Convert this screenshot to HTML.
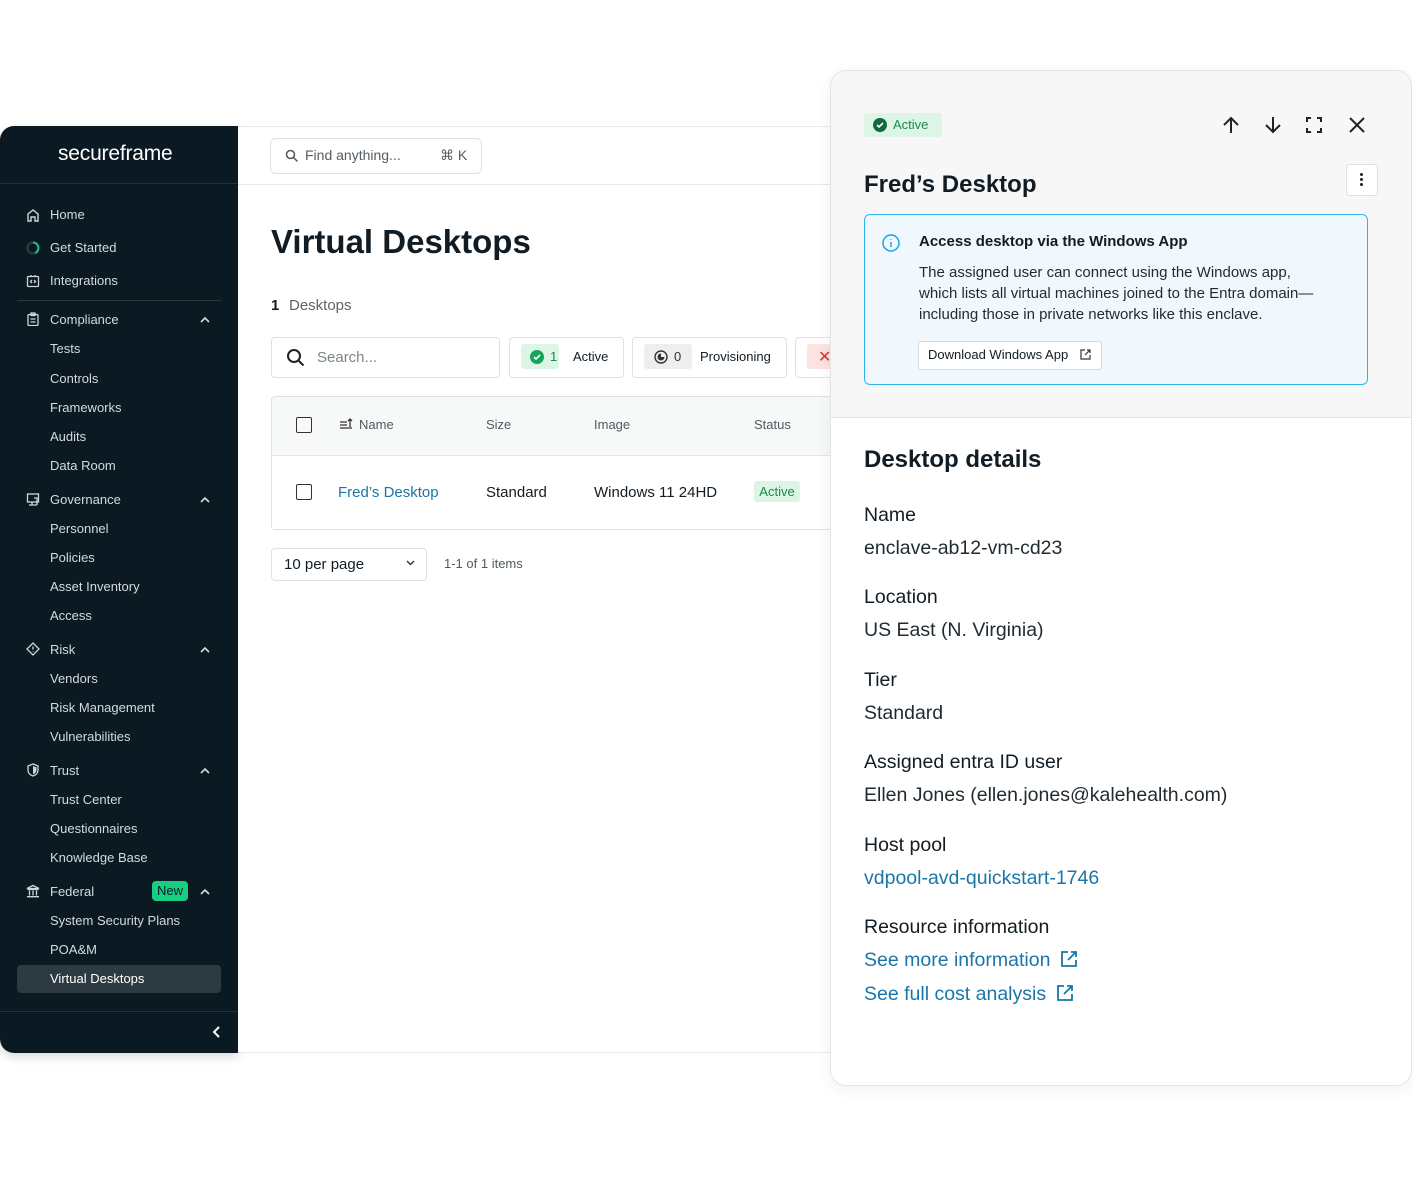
<!DOCTYPE html>
<html><head><meta charset="utf-8"><style>
*{box-sizing:border-box;margin:0;padding:0}
body{width:1412px;height:1200px;background:#fff;font-family:"Liberation Sans",sans-serif;position:relative;overflow:hidden;color:#111c24}
.a{position:absolute;white-space:nowrap}
#side{position:absolute;left:0;top:126px;width:238px;height:927px;background:#0b1a22;border-radius:14px 0 0 14px;box-shadow:0 4px 10px rgba(0,0,0,.15)}
.si{position:absolute;left:50px;font-size:13px;color:#d4dadd}
.ic{position:absolute;left:26px;width:14px;height:14px}
.chev{position:absolute;left:199px;width:12px;height:8px}
#main{position:absolute;left:238px;top:126px;width:600px;height:927px;background:#fff;border-top:1px solid #e6e8ea;border-bottom:1px solid #e6e8ea}
.box{position:absolute;border:1px solid #dde1e4;border-radius:4px;background:#fff}
#panel{position:absolute;left:830px;top:70px;width:582px;height:1016px;background:#fff;border:1px solid #e2e4e6;border-radius:16px;overflow:hidden;box-shadow:0 4px 16px rgba(0,0,0,.06)}
.lbl{position:absolute;left:33px;font-size:19.5px;color:#111c24}
.val{position:absolute;left:33px;font-size:19.5px;color:#1f2a31}
.lnk{color:#1a76a8}
</style></head><body>

<div id="side">
 <div class="a" style="left:58px;top:16px;font-size:21px;color:#fff;letter-spacing:-.2px">secureframe</div>
 <div style="position:absolute;left:0;top:57px;width:238px;height:1px;background:#253139"></div>
 <svg class="ic" style="top:82px" viewBox="0 0 14 14" fill="none" stroke="#cfd5d8" stroke-width="1.4"><path d="M2 13V6l5-4 5 4v7H9V9H5v4z"/></svg>
 <div class="si" style="top:81px">Home</div>
 <svg class="ic" style="top:115px" viewBox="0 0 14 14" fill="none" stroke-width="2"><circle cx="7" cy="7" r="5.5" stroke="#2f3c44"/><path d="M7 1.5A5.5 5.5 0 0 1 9 12.1" stroke="#16c784"/></svg>
 <div class="si" style="top:114px">Get Started</div>
 <svg class="ic" style="top:148px" viewBox="0 0 14 14" fill="none" stroke="#cfd5d8" stroke-width="1.3"><rect x="1.5" y="2.5" width="11" height="10" rx="1"/><path d="M5 1v2M9 1v2M6 6l-1.5 1.5L6 9M8 6l1.5 1.5L8 9"/></svg>
 <div class="si" style="top:147px">Integrations</div>
 <div style="position:absolute;left:17px;top:174px;width:204px;height:1px;background:#2a363d"></div>
 <svg class="ic" style="top:186px" viewBox="0 0 14 14" fill="none" stroke="#cfd5d8" stroke-width="1.3"><rect x="2" y="2.5" width="10" height="11" rx="1"/><rect x="5" y="1" width="4" height="2.5"/><path d="M4.5 7h5M4.5 10h5"/></svg>
 <div class="si" style="top:186px">Compliance</div><svg class="chev" style="top:190px" viewBox="0 0 12 8" fill="none" stroke="#d4dadd" stroke-width="1.6"><path d="M2 6l4-4 4 4"/></svg>
 <div class="si" style="top:215px">Tests</div>
 <div class="si" style="top:245px">Controls</div>
 <div class="si" style="top:274px">Frameworks</div>
 <div class="si" style="top:303px">Audits</div>
 <div class="si" style="top:332px">Data Room</div>
 <svg class="ic" style="top:366px" viewBox="0 0 14 14" fill="none" stroke="#cfd5d8" stroke-width="1.3"><rect x="1.5" y="2" width="11" height="8"/><path d="M6 10v3M3 13h8M8 6h3v7"/></svg>
 <div class="si" style="top:366px">Governance</div><svg class="chev" style="top:370px" viewBox="0 0 12 8" fill="none" stroke="#d4dadd" stroke-width="1.6"><path d="M2 6l4-4 4 4"/></svg>
 <div class="si" style="top:395px">Personnel</div>
 <div class="si" style="top:424px">Policies</div>
 <div class="si" style="top:453px">Asset Inventory</div>
 <div class="si" style="top:482px">Access</div>
 <svg class="ic" style="top:516px" viewBox="0 0 14 14" fill="none" stroke="#cfd5d8" stroke-width="1.3"><path d="M7 1l6 6-6 6-6-6z"/><path d="M7 4.5v3M7 9.3v.5"/></svg>
 <div class="si" style="top:516px">Risk</div><svg class="chev" style="top:520px" viewBox="0 0 12 8" fill="none" stroke="#d4dadd" stroke-width="1.6"><path d="M2 6l4-4 4 4"/></svg>
 <div class="si" style="top:545px">Vendors</div>
 <div class="si" style="top:574px">Risk Management</div>
 <div class="si" style="top:603px">Vulnerabilities</div>
 <svg class="ic" style="top:637px" viewBox="0 0 14 14"><path d="M7 1l5 2v4c0 3-2 5-5 6-3-1-5-3-5-6V3z" fill="none" stroke="#cfd5d8" stroke-width="1.3"/><path d="M7 3l3.5 1.4V7c0 2-1.4 3.6-3.5 4.4z" fill="#cfd5d8"/></svg>
 <div class="si" style="top:637px">Trust</div><svg class="chev" style="top:641px" viewBox="0 0 12 8" fill="none" stroke="#d4dadd" stroke-width="1.6"><path d="M2 6l4-4 4 4"/></svg>
 <div class="si" style="top:666px">Trust Center</div>
 <div class="si" style="top:695px">Questionnaires</div>
 <div class="si" style="top:724px">Knowledge Base</div>
 <svg class="ic" style="top:758px" viewBox="0 0 14 14" fill="none" stroke="#cfd5d8" stroke-width="1.3"><path d="M1 4.5L7 1.5l6 3zM1.5 5.5h11M3.5 6.5v5M7 6.5v5M10.5 6.5v5M1 12.7h12"/></svg>
 <div class="si" style="top:758px">Federal</div>
 <div class="a" style="left:152px;top:755px;width:36px;height:20px;background:#16cf82;border-radius:4px;font-size:13px;color:#0b1a22;text-align:center;line-height:20px">New</div>
 <svg class="chev" style="top:762px" viewBox="0 0 12 8" fill="none" stroke="#d4dadd" stroke-width="1.6"><path d="M2 6l4-4 4 4"/></svg>
 <div class="si" style="top:787px">System Security Plans</div>
 <div class="si" style="top:816px">POA&amp;M</div>
 <div style="position:absolute;left:17px;top:839px;width:204px;height:28px;background:#2e3a42;border-radius:4px"></div>
 <div class="si" style="top:845px;color:#fff">Virtual Desktops</div>
 <div style="position:absolute;left:0;top:885px;width:238px;height:1px;background:#253139"></div>
 <svg style="position:absolute;left:211px;top:899px" width="12" height="14" viewBox="0 0 12 14" fill="none" stroke="#fff" stroke-width="2"><path d="M8 2L3 7l5 5"/></svg>
</div>

<div id="main">
 <div style="position:absolute;left:0;top:57px;width:600px;height:1px;background:#e6e8ea"></div>
 <div class="box" style="left:32px;top:11px;width:212px;height:36px;border-radius:6px"></div>
 <svg class="a" style="left:47px;top:22px" width="14" height="14" viewBox="0 0 14 14" fill="none" stroke="#555" stroke-width="1.5"><circle cx="5.5" cy="5.5" r="4"/><path d="M8.5 8.5l4 4"/></svg>
 <div class="a" style="left:67px;top:20px;font-size:14px;color:#555e64">Find anything...</div>
 <div class="a" style="left:202px;top:20px;font-size:14px;color:#555e64">⌘ K</div>
 <div class="a" style="left:33px;top:96px;font-size:33px;font-weight:bold;color:#111c24">Virtual Desktops</div>
 <div class="a" style="left:33px;top:170px;font-size:15px;font-weight:bold">1</div>
 <div class="a" style="left:51px;top:170px;font-size:15px;color:#5b656c">Desktops</div>
 <div class="box" style="left:33px;top:210px;width:229px;height:41px"></div>
 <svg class="a" style="left:48px;top:221px" width="20" height="20" viewBox="0 0 20 20" fill="none" stroke="#222" stroke-width="2"><circle cx="8" cy="8" r="6"/><path d="M12.5 12.5l5 5"/></svg>
 <div class="a" style="left:79px;top:222px;font-size:15px;color:#7a848a">Search...</div>
 <div class="box" style="left:271px;top:210px;width:115px;height:41px"></div>
 <div class="a" style="left:283px;top:217px;width:38px;height:25px;background:#dcf5e7;border-radius:3px"></div>
 <svg class="a" style="left:292px;top:223px" width="14" height="14" viewBox="0 0 14 14"><circle cx="7" cy="7" r="7" fill="#1aa35b"/><path d="M4 7l2 2 4-4" stroke="#fff" stroke-width="1.6" fill="none"/></svg>
 <div class="a" style="left:312px;top:222px;font-size:13px;color:#1a8a4f">1</div>
 <div class="a" style="left:335px;top:222px;font-size:13px;color:#111c24">Active</div>
 <div class="box" style="left:394px;top:210px;width:155px;height:41px"></div>
 <div class="a" style="left:406px;top:217px;width:48px;height:25px;background:#eceef0;border-radius:3px"></div>
 <svg class="a" style="left:416px;top:223px" width="14" height="14" viewBox="0 0 14 14"><circle cx="7" cy="7" r="6" fill="none" stroke="#333" stroke-width="1.4"/><path d="M7 3.5A3.5 3.5 0 1 0 10.5 7H7z" fill="#333"/></svg>
 <div class="a" style="left:436px;top:222px;font-size:13px;color:#333">0</div>
 <div class="a" style="left:462px;top:222px;font-size:13px;color:#111c24">Provisioning</div>
 <div class="box" style="left:557px;top:210px;width:60px;height:41px"></div>
 <div class="a" style="left:569px;top:217px;width:40px;height:25px;background:#fde2e2;border-radius:3px"></div>
 <div class="a" style="left:580px;top:220px;font-size:16px;color:#d93030">✕</div>
 <div class="box" style="left:33px;top:269px;width:600px;height:134px;background:#f7f8f8"></div>
 <div style="position:absolute;left:34px;top:328px;width:566px;height:74px;background:#fff;border-top:1px solid #e3e6e8"></div>
 <div class="a" style="left:58px;top:290px;width:16px;height:16px;border:1.5px solid #333;border-radius:2px"></div>
 <svg class="a" style="left:101px;top:291px" width="14" height="12" viewBox="0 0 14 12" fill="none" stroke="#333" stroke-width="1.3"><path d="M1 4h7M1 7h7M1 10h12M11 9V1M9 3l2-2 2 2"/></svg>
 <div class="a" style="left:121px;top:290px;font-size:13px;color:#4f5a61">Name</div>
 <div class="a" style="left:248px;top:290px;font-size:13px;color:#4f5a61">Size</div>
 <div class="a" style="left:356px;top:290px;font-size:13px;color:#4f5a61">Image</div>
 <div class="a" style="left:516px;top:290px;font-size:13px;color:#4f5a61">Status</div>
 <div class="a" style="left:58px;top:357px;width:16px;height:16px;border:1.5px solid #333;border-radius:2px"></div>
 <div class="a lnk" style="left:100px;top:357px;font-size:15px">Fred’s Desktop</div>
 <div class="a" style="left:248px;top:357px;font-size:15px">Standard</div>
 <div class="a" style="left:356px;top:357px;font-size:15px">Windows 11 24HD</div>
 <div class="a" style="left:516px;top:354px;width:46px;height:21px;background:#dcf5e7;border-radius:3px;font-size:13px;color:#1a8a4f;text-align:center;line-height:21px">Active</div>
 <div class="box" style="left:33px;top:421px;width:156px;height:33px"></div>
 <div class="a" style="left:46px;top:429px;font-size:15px">10 per page</div>
 <svg class="a" style="left:168px;top:433px" width="9" height="6" viewBox="0 0 9 6" fill="none" stroke="#333" stroke-width="1.4"><path d="M1 1l3.5 3.5L8 1"/></svg>
 <div class="a" style="left:206px;top:429px;font-size:13px;color:#4f5a61">1-1 of 1 items</div>
</div>

<div id="panel">
 <div style="position:absolute;left:0;top:0;width:582px;height:347px;background:#f7f7f7;border-bottom:1px solid #e3e5e7"></div>
 <div class="a" style="left:33px;top:42px;width:78px;height:24px;background:#dcf5e7;border-radius:3px"></div>
 <svg class="a" style="left:42px;top:47px" width="14" height="14" viewBox="0 0 14 14"><circle cx="7" cy="7" r="7" fill="#13683f"/><path d="M4 7l2 2 4-4" stroke="#fff" stroke-width="1.6" fill="none"/></svg>
 <div class="a" style="left:62px;top:46px;font-size:13px;color:#1a8a4f">Active</div>
 <svg class="a" style="left:390px;top:44px" width="20" height="20" viewBox="0 0 20 20" fill="none" stroke="#222" stroke-width="2"><path d="M10 18V3M3 10l7-7 7 7"/></svg>
 <svg class="a" style="left:432px;top:44px" width="20" height="20" viewBox="0 0 20 20" fill="none" stroke="#222" stroke-width="2"><path d="M10 2v15M3 10l7 7 7-7"/></svg>
 <svg class="a" style="left:475px;top:46px" width="16" height="16" viewBox="0 0 16 16" fill="none" stroke="#222" stroke-width="2"><path d="M1 5V1h4M11 1h4v4M15 11v4h-4M5 15H1v-4"/></svg>
 <svg class="a" style="left:517px;top:45px" width="18" height="18" viewBox="0 0 18 18" fill="none" stroke="#222" stroke-width="2"><path d="M2 2l14 14M16 2L2 16"/></svg>
 <div class="a" style="left:33px;top:100px;font-size:24px;font-weight:bold;color:#111c24">Fred’s Desktop</div>
 <div class="a" style="left:515px;top:93px;width:32px;height:32px;background:#fff;border:1px solid #dde1e4;border-radius:4px"></div>
 <div class="a" style="left:529px;top:102px;width:3px;height:3px;background:#222;border-radius:50%;box-shadow:0 5px 0 #222,0 10px 0 #222"></div>
 <div class="a" style="left:33px;top:143px;width:504px;height:171px;background:#f0f8fd;border:1.5px solid #2bb4ef;border-radius:6px"></div>
 <svg class="a" style="left:51px;top:163px" width="18" height="18" viewBox="0 0 18 18" fill="none" stroke="#1aa3e8" stroke-width="1.5"><circle cx="9" cy="9" r="8"/><path d="M9 8v5M9 5v.8"/></svg>
 <div class="a" style="left:88px;top:162px;font-size:15px;font-weight:bold;color:#111c24">Access desktop via the Windows App</div>
 <div class="a" style="left:88px;top:191px;font-size:15px;line-height:21px;color:#1f2a31;white-space:normal;width:405px">The assigned user can connect using the Windows app, which lists all virtual machines joined to the Entra domain—including those in private networks like this enclave.</div>
 <div class="a" style="left:87px;top:270px;width:184px;height:29px;background:#fff;border:1px solid #d6dadd;border-radius:3px"></div>
 <div class="a" style="left:97px;top:276px;font-size:13px;color:#111c24">Download Windows App</div>
 <svg class="a" style="left:249px;top:278px" width="11" height="11" viewBox="0 0 11 11" fill="none" stroke="#333" stroke-width="1.2"><path d="M5 1H1v9h9V6M7 1h3v3M10 1L5 6"/></svg>
 <div class="a" style="left:33px;top:375px;font-size:24px;font-weight:bold;color:#111c24">Desktop details</div>
 <div class="lbl a" style="top:433px">Name</div>
 <div class="val a" style="top:466px">enclave-ab12-vm-cd23</div>
 <div class="lbl a" style="top:515px">Location</div>
 <div class="val a" style="top:548px">US East (N. Virginia)</div>
 <div class="lbl a" style="top:598px">Tier</div>
 <div class="val a" style="top:631px">Standard</div>
 <div class="lbl a" style="top:680px">Assigned entra ID user</div>
 <div class="val a" style="top:713px">Ellen Jones (ellen.jones@kalehealth.com)</div>
 <div class="lbl a" style="top:763px">Host pool</div>
 <div class="val a lnk" style="top:796px">vdpool-avd-quickstart-1746</div>
 <div class="lbl a" style="top:845px">Resource information</div>
 <div class="val a lnk" style="top:878px">See more information <svg width="18" height="18" viewBox="0 0 18 18" fill="none" stroke="#1a76a8" stroke-width="1.8" style="vertical-align:-2px;margin-left:4px"><path d="M8 2H2v14h14v-6M11 2h5v5M16 2L8 10"/></svg></div>
 <div class="val a lnk" style="top:912px">See full cost analysis <svg width="18" height="18" viewBox="0 0 18 18" fill="none" stroke="#1a76a8" stroke-width="1.8" style="vertical-align:-2px;margin-left:4px"><path d="M8 2H2v14h14v-6M11 2h5v5M16 2L8 10"/></svg></div>
</div>
</body></html>
